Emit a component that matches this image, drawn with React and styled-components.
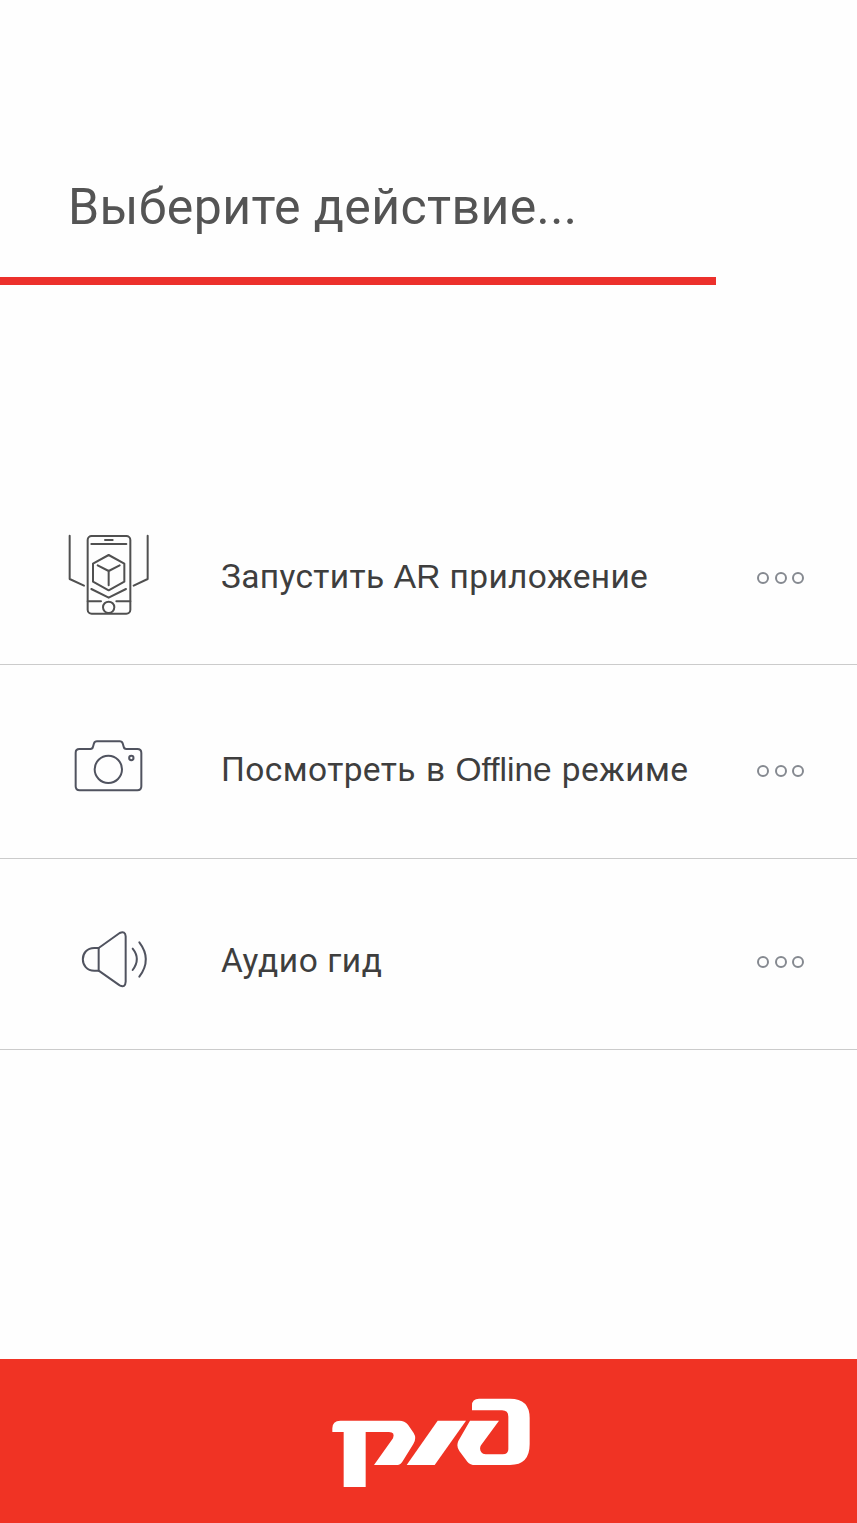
import React from 'react';
import styled, { createGlobalStyle } from 'styled-components';

const GlobalStyle = createGlobalStyle`
  * { box-sizing: border-box; }
  body { margin: 0; background: #fefefe; }
`;

const Screen = styled.main`
  display: flex;
  flex-direction: column;
  width: 857px;
  height: 1523px;
  overflow: hidden;
  background: #fefefe;
  font-family: Roboto, "Liberation Sans", sans-serif;
`;

const Header = styled.header`
  width: 716px;
  height: 285px;
  padding: 177px 0 0 68px;
  border-bottom: 8px solid #ec302c;
`;

const Title = styled.h1`
  margin: 0;
  font-size: 50px;
  font-weight: 400;
  line-height: 60px;
  letter-spacing: 0.4px;
  color: #545454;
  white-space: nowrap;
`;

const Menu = styled.nav`
  display: flex;
  flex-direction: column;
  margin-top: 180px;
`;

const Row = styled.a`
  display: flex;
  align-items: flex-start;
  height: ${(p) => p.$height}px;
  padding: ${(p) => p.$top}px 53px 0 55px;
  border-bottom: 1px solid #cbcbcb;
  color: #3e3e3e;
`;

const Icon = styled.svg`
  flex: none;
  width: 110px;
  height: ${(p) => p.$height}px;
  fill: none;
  stroke: ${(p) => p.$color};
  stroke-width: 6;
  stroke-linecap: round;
  stroke-linejoin: round;
`;

const Caption = styled.div`
  flex: 1;
  display: flex;
  justify-content: space-between;
  align-items: center;
  height: 40px;
  margin: ${(p) => p.$offset}px 0 0 56px;
`;

const Label = styled.span`
  font-size: 33.5px;
  line-height: 40px;
  letter-spacing: ${(p) => p.$tracking}px;
  word-spacing: ${(p) => p.$wordGap}px;
  white-space: nowrap;
`;

const Latin = styled.span`
  font-family: "Liberation Sans", Arial, sans-serif;
  letter-spacing: 0;
  line-height: 1;
`;

const More = styled.span`
  display: flex;
  gap: 5.5px;
  margin-top: 1px;
`;

const Dot = styled.i`
  width: 12px;
  height: 12px;
  border: 2px solid #858990;
  border-radius: 50%;
`;

const Footer = styled.footer`
  display: flex;
  justify-content: center;
  height: 164px;
  margin-top: auto;
  padding: 26px 0 0 8px;
  background: #f03324;
`;

const Logo = styled.svg`
  width: 225px;
  height: 115px;
  fill: #fff;
`;

const PhoneIcon = () => (
  <Icon $height={110} $color="#505050" viewBox="0 0 330 330">
    <path d="M44 47V177L87 197M278 47V177L236 197" />
    <rect x="98" y="48" width="128" height="233" rx="12" />
    <path d="M150 60H173M109 72H214M98 244H138M184 244H226" />
    <path d="M161 105L208 131V185L161 211L114 185V131Z" />
    <path d="M128 136L161 153L194 136M161 153V196M109 207L161 233L213 207" />
    <circle cx="161" cy="262" r="17" />
  </Icon>
);

const CameraIcon = () => (
  <Icon $height={90} $color="#50535f" viewBox="-15 0 330 270">
    <path d="M58 87H91Q98 87 99 80L102 70Q104 64 111 64H179Q186 64 188 70L191 80Q192 87 199 87H232Q244 87 244 99V199Q244 211 232 211H59Q47 211 47 199V98Q47 87 58 87Z" />
    <circle cx="145" cy="148" r="41" />
    <circle cx="214" cy="114" r="6.5" />
  </Icon>
);

const SpeakerIcon = () => (
  <Icon $height={90} $color="#50535f" viewBox="-30 0 330 270">
    <path d="M101 99L164 54Q181 47 182 64V200Q181 220 164 211L101 167Z" />
    <path d="M101 99H88C42 99 42 167 88 167H101" />
    <path d="M203 101Q228 132 203 165M223 82Q262 133 223 185" />
  </Icon>
);

const items = [
  { id: 'ar', label: <>Запустить <Latin>AR</Latin> приложение</>, icon: PhoneIcon, height: 200, top: 55, offset: 37, tracking: 0.35, wordGap: 0.6 },
  { id: 'offline', label: <>Посмотреть в <Latin>Offline</Latin> режиме</>, icon: CameraIcon, height: 194, top: 55, offset: 30, tracking: 0.4, wordGap: 1.3 },
  { id: 'audio', label: 'Аудио гид', icon: SpeakerIcon, height: 191, top: 56, offset: 26, tracking: 0.55, wordGap: 0 },
];

export default function App() {
  return (
    <>
      <GlobalStyle />
      <Screen>
        <Header>
          <Title>Выберите действие...</Title>
        </Header>
        <Menu>
          {items.map(({ id, label, icon: Glyph, height, top, offset, tracking, wordGap }) => (
            <Row key={id} $height={height} $top={top}>
              <Glyph />
              <Caption $offset={offset}>
                <Label $tracking={tracking} $wordGap={wordGap}>{label}</Label>
                <More><Dot /><Dot /><Dot /></More>
              </Caption>
            </Row>
          ))}
        </Menu>
        <Footer>
          <Logo viewBox="0 0 675 345" role="img" aria-label="РЖД">
            <path d="M37 141V130Q37 107 61 107H238Q254 107 264 119L281 144Q291 160 280 177L248 229Q242 240 232 240H162L219 160Q226 141 207 141H137V306H71V141Z" />
            <path d="M353 107H438L344 240H260Z" />
            <path d="M450 107H537L483 181Q477 191 484 202Q488 208 497 208H548Q565 208 565 193V95Q565 76 546 76H456V61Q456 41 477 41H570Q629 41 629 99V178Q629 240 570 240H466Q450 240 442 230L418 198Q408 184 415 168Z" />
          </Logo>
        </Footer>
      </Screen>
    </>
  );
}
